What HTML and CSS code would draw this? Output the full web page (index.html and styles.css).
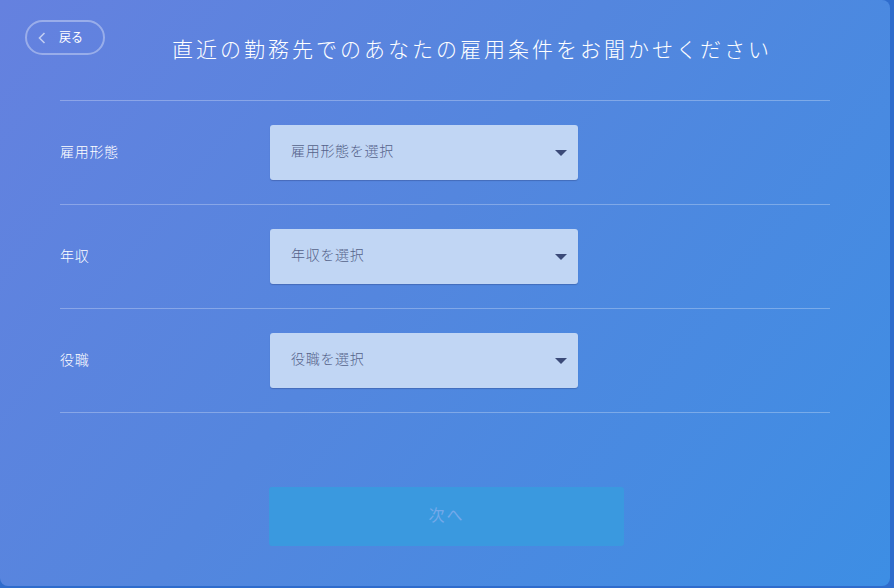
FILE: index.html
```html
<!DOCTYPE html>
<html lang="ja">
<head>
<meta charset="utf-8">
<link rel="stylesheet" href="styles.css">
</head>
<body>
<div class="card">
  <header class="header">
    <button class="back" type="button">
      <svg class="back-icon" width="8" height="12" viewBox="0 0 8 12"><path d="M6.5 1 L1.5 6 L6.5 11" fill="none" stroke="rgba(255,255,255,0.6)" stroke-width="1.6"/></svg>
      <span class="back-text">戻る</span>
    </button>
    <h1 class="title">直近の勤務先でのあなたの雇用条件をお聞かせください</h1>
  </header>
  <div class="form">
    <div class="row">
      <div class="label">雇用形態</div>
      <div class="select"><span class="placeholder">雇用形態を選択</span><i class="caret"></i></div>
    </div>
    <div class="row">
      <div class="label">年収</div>
      <div class="select"><span class="placeholder">年収を選択</span><i class="caret"></i></div>
    </div>
    <div class="row">
      <div class="label">役職</div>
      <div class="select"><span class="placeholder">役職を選択</span><i class="caret"></i></div>
    </div>
  </div>
  <div class="actions">
    <button class="next" type="button">次へ</button>
  </div>
</div>
</body>
</html>
```

FILE: styles.css
```css
html, body {
  margin: 0;
  padding: 0;
}
body {
  width: 894px;
  height: 588px;
  background: #2f6ccc;
  font-family: "Noto Sans CJK JP", "Noto Sans", sans-serif;
  overflow: hidden;
}
.card {
  width: 890px;
  height: 586px;
  border-radius: 0 8px 8px 8px;
  background: linear-gradient(128deg, #6581df 0%, #5486de 45%, #3d8ee4 100%);
  box-sizing: border-box;
  padding: 20px 0 0 25px;
}
.header {
  display: flex;
  align-items: flex-start;
  height: 80px;
}
.back {
  box-sizing: border-box;
  width: 80px;
  height: 35px;
  border: 2px solid rgba(255, 255, 255, 0.35);
  border-radius: 18px;
  background: transparent;
  color: #fff;
  font-family: inherit;
  font-size: 12px;
  display: flex;
  align-items: center;
  padding: 0 0 2px 11px;
  gap: 13px;
  cursor: pointer;
}
.back-icon {
  margin-top: 2px;
}
.title {
  margin: 13px 0 0 67px;
  font-size: 21px;
  font-weight: 300;
  letter-spacing: 3px;
  color: #fff;
  line-height: 30px;
  white-space: nowrap;
}
.form {
  margin-left: 35px;
  width: 770px;
  border-top: 1px solid rgba(255, 255, 255, 0.28);
}
.row {
  display: flex;
  align-items: center;
  padding: 24px 0;
  border-bottom: 1px solid rgba(255, 255, 255, 0.28);
}
.label {
  width: 210px;
  color: #fff;
  font-size: 14px;
  font-weight: 300;
  letter-spacing: 0.7px;
  padding-bottom: 4px;
}
.select {
  box-sizing: border-box;
  width: 308px;
  height: 55px;
  background: #c1d6f4;
  border-radius: 3px;
  box-shadow: 0 1px 1px rgba(40, 60, 120, 0.35);
  display: flex;
  align-items: center;
  justify-content: space-between;
  padding: 0 11px 0 21px;
  color: #55638a;
  font-size: 14px;
  font-weight: 300;
  letter-spacing: 0.7px;
}
.placeholder {
  padding-bottom: 5px;
}
.caret {
  width: 0;
  height: 0;
  border-left: 6px solid transparent;
  border-right: 6px solid transparent;
  border-top: 6px solid #3b4a78;
}
.actions {
  margin: 74px 0 0 244px;
}
.next {
  width: 355px;
  height: 59px;
  border: 0;
  border-radius: 3px;
  background: #3a99df;
  color: #74a9ea;
  font-family: inherit;
  font-size: 16px;
  letter-spacing: 2px;
  padding: 0 0 5px;
}
```
